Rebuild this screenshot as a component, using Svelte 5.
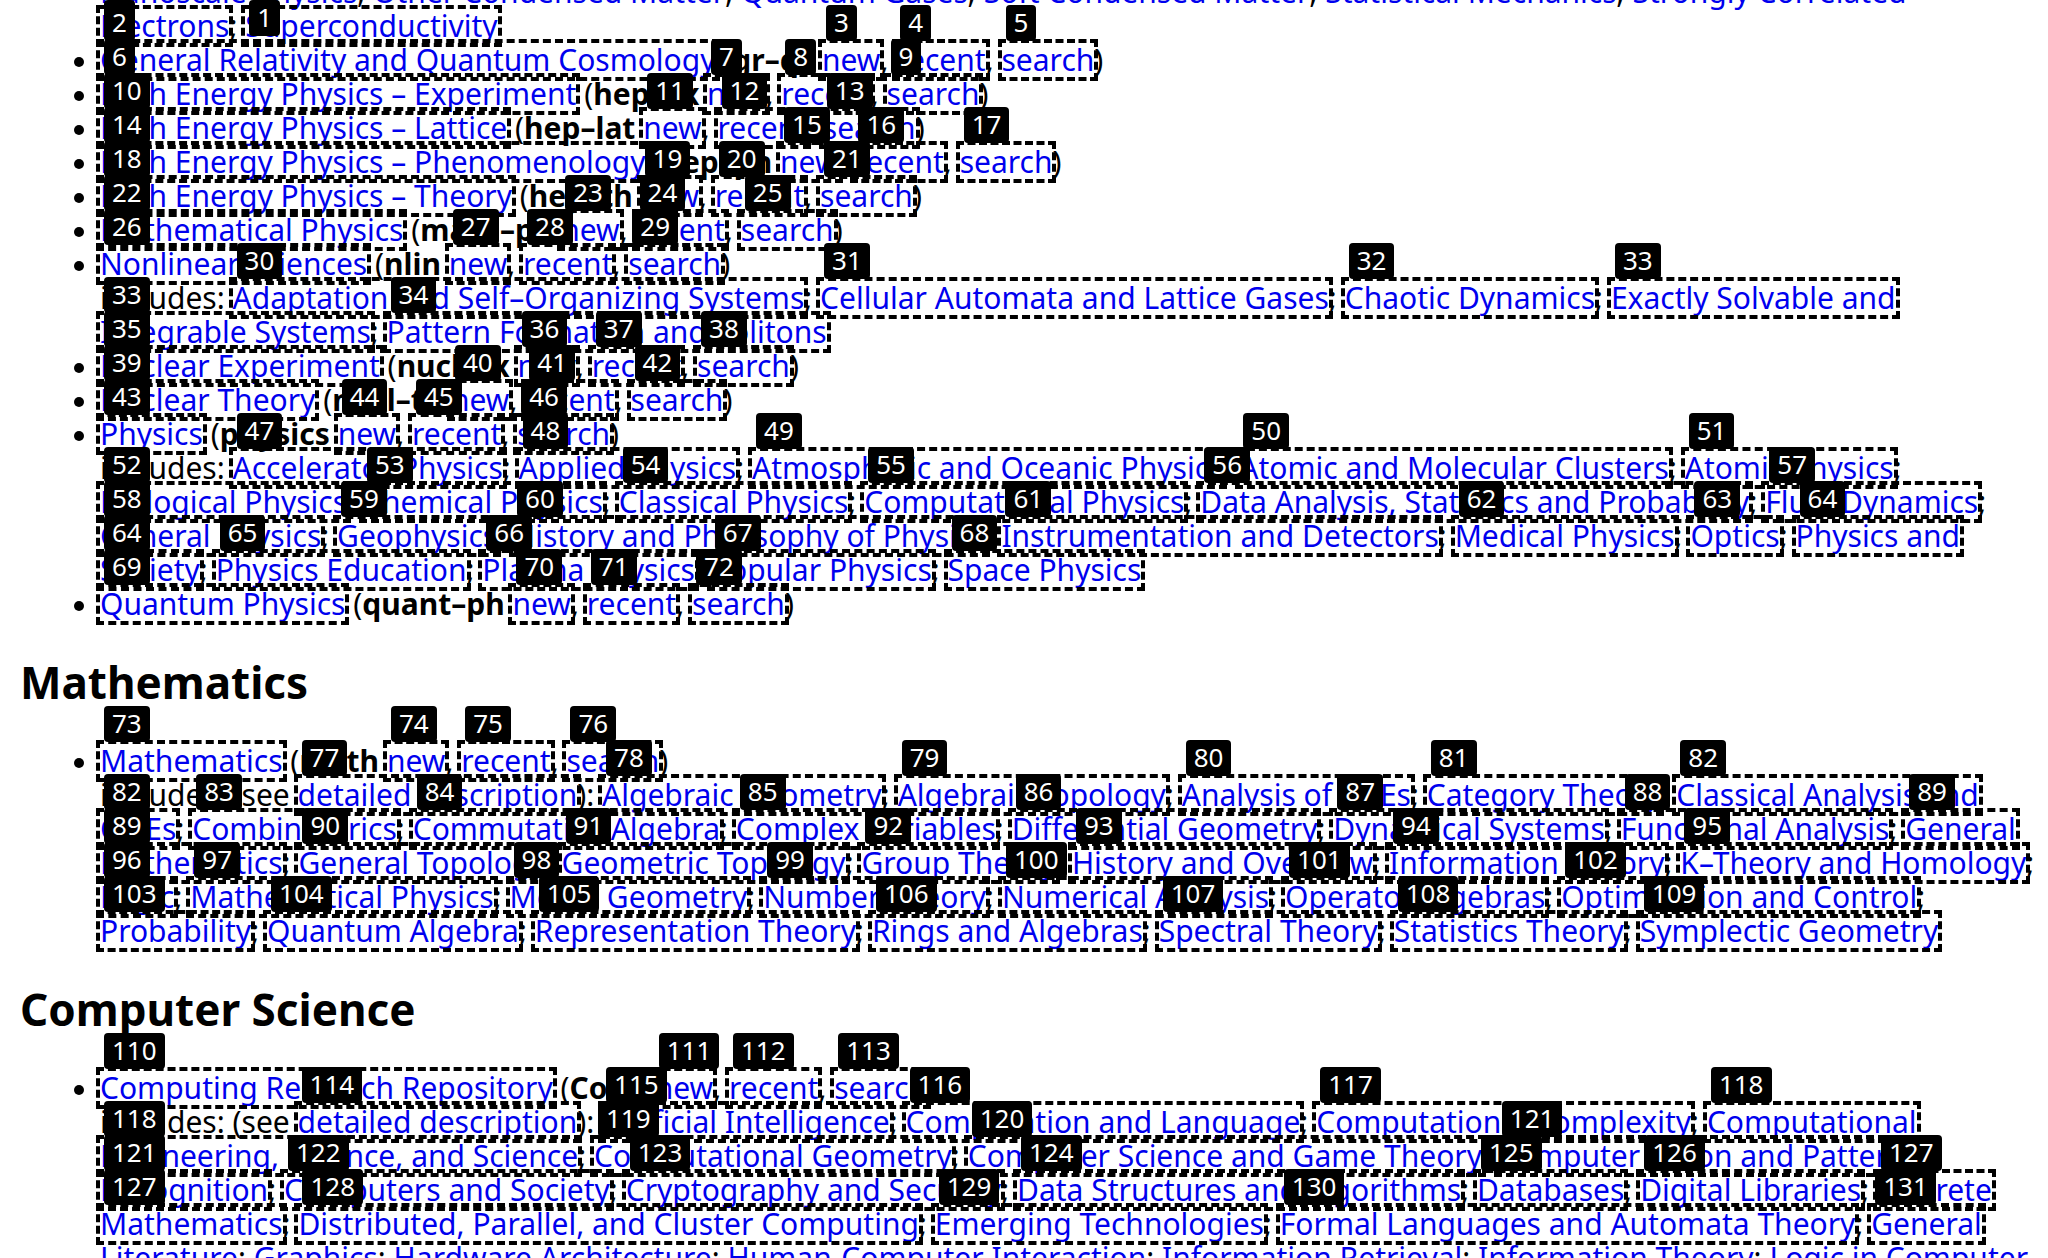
<script>
  // Line notation: [link] hinted link, [+link] rest of a wrapped hinted link,
  // <link> link without a hint, *text* bold archive code, anything else plain text.
  const actions = '[new], [recent], [search])';

  const sections = [
    {
      title: '',
      entries: [
        {
          open: true,
          lines: [
            '<Nanoscale Physics>; <Other Condensed Matter>; <Quantum Gases>; <Soft Condensed Matter>; <Statistical Mechanics>; <Strongly Correlated>',
            '[Electrons]; [Superconductivity]'
          ]
        },
        { lines: ['[General Relativity and Quantum Cosmology] (*gr–qc* ' + actions] },
        { lines: ['[High Energy Physics – Experiment] (*hep–ex* ' + actions] },
        { lines: ['[High Energy Physics – Lattice] (*hep–lat* ' + actions] },
        { lines: ['[High Energy Physics – Phenomenology] (*hep–ph* ' + actions] },
        { lines: ['[High Energy Physics – Theory] (*hep–th* ' + actions] },
        { lines: ['[Mathematical Physics] (*math–ph* ' + actions] },
        {
          lines: [
            '[Nonlinear Sciences] (*nlin* ' + actions,
            'includes: [Adaptation and Self–Organizing Systems]; [Cellular Automata and Lattice Gases]; [Chaotic Dynamics]; [Exactly Solvable and]',
            '[+Integrable Systems]; [Pattern Formation and Solitons]'
          ]
        },
        { lines: ['[Nuclear Experiment] (*nucl–ex* ' + actions] },
        { lines: ['[Nuclear Theory] (*nucl–th* ' + actions] },
        {
          lines: [
            '[Physics] (*physics* ' + actions,
            'includes: [Accelerator Physics]; [Applied Physics]; [Atmospheric and Oceanic Physics]; [Atomic and Molecular Clusters]; [Atomic Physics];',
            '[Biological Physics]; [Chemical Physics]; [Classical Physics]; [Computational Physics]; [Data Analysis, Statistics and Probability]; [Fluid Dynamics];',
            '[General Physics]; [Geophysics]; [History and Philosophy of Physics]; [Instrumentation and Detectors]; [Medical Physics]; [Optics]; [Physics and]',
            '[+Society]; [Physics Education]; [Plasma Physics]; [Popular Physics]; [Space Physics]'
          ]
        },
        { lines: ['[Quantum Physics] (*quant–ph* ' + actions] }
      ]
    },
    {
      title: 'Mathematics',
      entries: [
        {
          lines: [
            '[Mathematics] (*math* ' + actions,
            'includes: (see [detailed description]): [Algebraic Geometry]; [Algebraic Topology]; [Analysis of PDEs]; [Category Theory]; [Classical Analysis and]',
            '[+ODEs]; [Combinatorics]; [Commutative Algebra]; [Complex Variables]; [Differential Geometry]; [Dynamical Systems]; [Functional Analysis]; [General]',
            '[+Mathematics]; [General Topology]; [Geometric Topology]; [Group Theory]; [History and Overview]; [Information Theory]; [K–Theory and Homology];',
            '[Logic]; [Mathematical Physics]; [Metric Geometry]; [Number Theory]; [Numerical Analysis]; [Operator Algebras]; [Optimization and Control];',
            '[Probability]; [Quantum Algebra]; [Representation Theory]; [Rings and Algebras]; [Spectral Theory]; [Statistics Theory]; [Symplectic Geometry]'
          ]
        }
      ]
    },
    {
      title: 'Computer Science',
      entries: [
        {
          lines: [
            '[Computing Research Repository] (*CoRR* ' + actions,
            'includes: (see [detailed description]): [Artificial Intelligence]; [Computation and Language]; [Computational Complexity]; [Computational]',
            '[+Engineering, Finance, and Science]; [Computational Geometry]; [Computer Science and Game Theory]; [Computer Vision and Pattern]',
            '[+Recognition]; [Computers and Society]; [Cryptography and Security]; [Data Structures and Algorithms]; [Databases]; [Digital Libraries]; [Discrete]',
            '[+Mathematics]; [Distributed, Parallel, and Cluster Computing]; [Emerging Technologies]; [Formal Languages and Automata Theory]; [General]',
            '<Literature>; <Graphics>; <Hardware Architecture>; <Human-Computer Interaction>; <Information Retrieval>; <Information Theory>; <Logic in Computer>'
          ]
        }
      ]
    }
  ];

  let next = 0;
  function parse(line) {
    return line
      .split(/(\[[^\]]+\]|<[^>]+>|\*[^*]+\*)/)
      .filter(Boolean)
      .map((part) => {
        const body = part.slice(1, -1);
        if (part[0] === '[') {
          return body[0] === '+'
            ? { kind: 'hint', text: body.slice(1), n: next - 1 }
            : { kind: 'hint', text: body, n: next++ };
        }
        if (part[0] === '<') return { kind: 'link', text: body };
        if (part[0] === '*') return { kind: 'code', text: body };
        return { kind: 'text', text: part };
      });
  }

  const page = sections.map((s) => ({
    title: s.title,
    entries: s.entries.map((e) => ({ open: e.open, lines: e.lines.map(parse) }))
  }));
</script>

<main>
  {#each page as section}
    <section>
      {#if section.title}<h2>{section.title}</h2>{/if}
      <ul>
        {#each section.entries as entry}
          <li class:open={entry.open}>
            <div class="body">
              {#each entry.lines as line}
                <div class="line">{#each line as p}{#if p.kind === 'hint'}<a class="hinted" href="#top">{p.text}<span class="badge" class:edge={p.n < 2}>{p.n}</span></a>{:else if p.kind === 'link'}<a href="#top">{p.text}</a>{:else if p.kind === 'code'}<b>{p.text}</b>{:else}{p.text}{/if}{/each}</div>
              {/each}
            </div>
          </li>
        {/each}
      </ul>
    </section>
  {/each}
</main>

<style>
  :global(html) {
    overflow: hidden;
  }
  :global(body) {
    margin: 0;
    background: #fff;
  }
  main {
    height: 100vh;
    overflow: hidden;
    padding: 0 20px;
    box-sizing: border-box;
    color: #000;
    font: 30px/34px "Noto Sans", "Open Sans", sans-serif;
  }
  section:first-child {
    margin-top: -25px;
  }
  h2 {
    margin: 35px 0 36px;
    font-size: 44px;
    line-height: 52px;
    font-weight: 700;
  }
  ul {
    list-style: none;
    margin: 0;
    padding: 0 0 0 54px;
  }
  li {
    display: flex;
    gap: 16px;
  }
  li::before {
    content: "";
    flex: none;
    width: 10px;
    height: 10px;
    margin-top: 14px;
    border-radius: 50%;
    background: #000;
  }
  li.open::before {
    background: none;
  }
  .line {
    height: 34px;
    white-space: pre;
  }
  a {
    color: #00e;
    text-decoration: none;
  }
  .hinted {
    position: relative;
    display: inline-block;
    outline: 4px dashed #000;
  }
  .badge {
    position: absolute;
    z-index: 1;
    top: -38px;
    left: 4px;
    padding: 0 8px 2px;
    border-radius: 4px;
    background: #000;
    color: #fff;
    font-size: 26px;
    line-height: 34px;
  }
  .badge.edge {
    top: -9px;
  }
</style>
